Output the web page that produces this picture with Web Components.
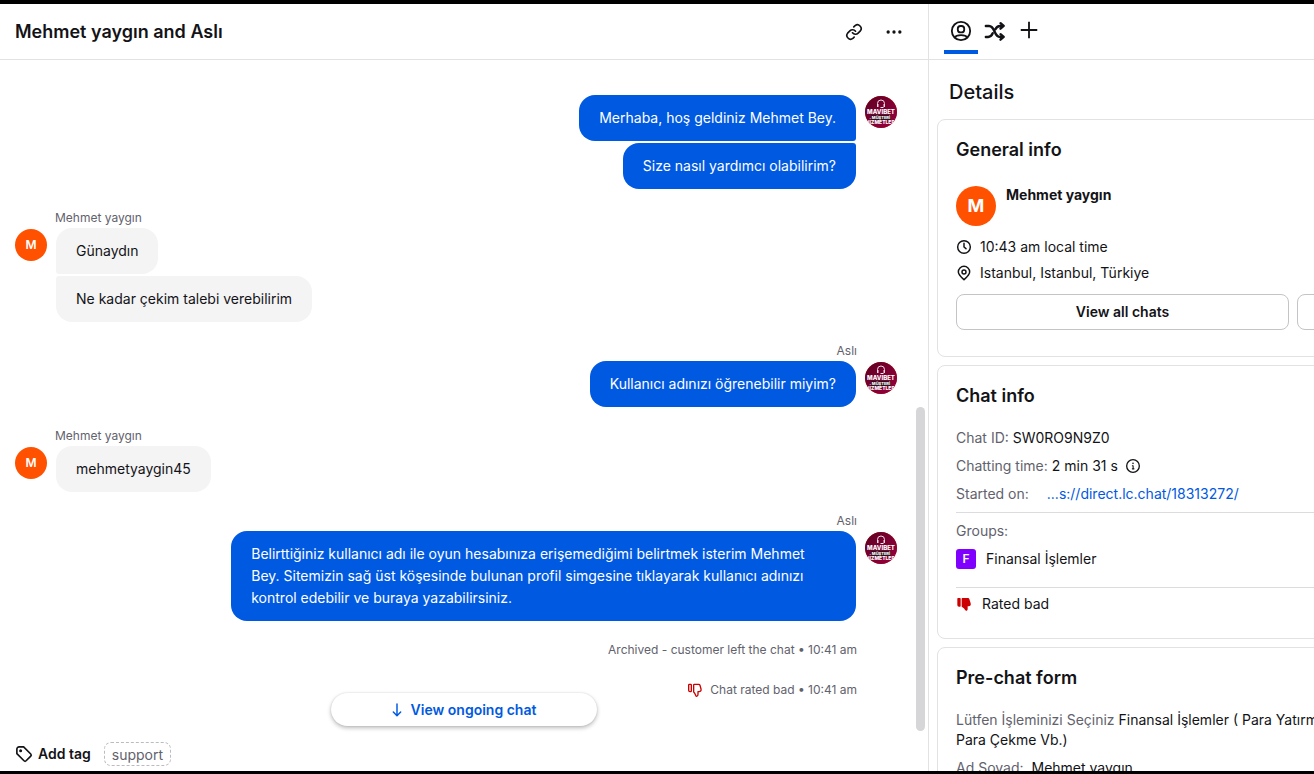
<!DOCTYPE html>
<html lang="tr">
<head>
<meta charset="utf-8">
<title>Mehmet yaygın and Aslı</title>
<style>
  html, body { margin: 0; height: 100%; }
  body {
    --ink: #131317; --muted: #62626d; --line: #e2e2e4; --blue: #0059e1; --orange: #ff5100; --red: #cc0000;
    font: 14px/20px Inter, "Open Sans", sans-serif; color: var(--ink); background: #fff;
  }
</style>
</head>
<body>
<chat-app>
  <chat-thread slot="main" heading="Mehmet yaygın and Aslı">
    <chat-group side="agent">
      <chat-bubble>Merhaba, hoş geldiniz Mehmet Bey.</chat-bubble>
      <chat-bubble>Size nasıl yardımcı olabilirim?</chat-bubble>
    </chat-group>
    <chat-group side="visitor" author="Mehmet yaygın">
      <chat-bubble>Günaydın</chat-bubble>
      <chat-bubble>Ne kadar çekim talebi verebilirim</chat-bubble>
    </chat-group>
    <chat-group side="agent" author="Aslı">
      <chat-bubble>Kullanıcı adınızı öğrenebilir miyim?</chat-bubble>
    </chat-group>
    <chat-group side="visitor" author="Mehmet yaygın">
      <chat-bubble>mehmetyaygin45</chat-bubble>
    </chat-group>
    <chat-group side="agent" author="Aslı">
      <chat-bubble>Belirttiğiniz kullanıcı adı ile oyun hesabınıza erişemediğimi belirtmek isterim Mehmet Bey. Sitemizin sağ üst köşesinde bulunan profil simgesine tıklayarak kullanıcı adınızı kontrol edebilir ve buraya yazabilirsiniz.</chat-bubble>
    </chat-group>
    <chat-event>Archived - customer left the chat • 10:41 am</chat-event>
    <chat-event><ui-icon name="thumb-outline"></ui-icon>Chat rated bad • 10:41 am</chat-event>
  </chat-thread>
  <details-panel slot="side">
    <info-card heading="General info"><general-info></general-info></info-card>
    <info-card heading="Chat info"><chat-info></chat-info></info-card>
    <info-card heading="Pre-chat form"><prechat-form></prechat-form></info-card>
  </details-panel>
</chat-app>

<script>
const define = (name, render) => customElements.define(name, class extends HTMLElement {
  connectedCallback() {
    if (this.shadowRoot) return;
    const t = document.createElement('template');
    t.innerHTML = render(this);
    this.attachShadow({ mode: 'open' }).append(t.content.cloneNode(true));
  }
});

const stroke = (body, w = 2) => `<g fill="none" stroke="currentColor" stroke-width="${w}" stroke-linecap="round" stroke-linejoin="round">${body}</g>`;
const icons = {
  link: [18, stroke('<path d="M10 13a5 5 0 0 0 7.5.5l3-3a5 5 0 0 0-7-7l-1.800 1.700"/><path d="M14 11a5 5 0 0 0-7.500-.5l-3 3a5 5 0 0 0 7 7l1.700-1.700"/>', 2.2)],
  more: [20, '<g fill="currentColor"><circle cx="5" cy="12" r="2"/><circle cx="12" cy="12" r="2"/><circle cx="19" cy="12" r="2"/></g>'],
  person: [22, stroke('<circle cx="12" cy="12" r="10"/><rect x="8.500" y="6.500" width="7" height="7" rx="3"/><path d="M5.500 19c1-2.500 3.600-2.500 6.500-2.500s5.500 0 6.500 2.500"/>')],
  shuffle: [22, stroke('<path d="M2 6.500h3.500C12.500 6.500 10.500 18.500 17.500 18.500H21M2 18.500h2.500c2.600 0 4-1.600 5-4M12.500 10c1-2.200 2.400-3.500 5-3.500H21M18 3.500l3.500 3-3.500 3M18 15.500l3.500 3-3.500 3"/>', 2.6)],
  plus: [22, '<path d="M12 3v18M3 12h18" stroke="currentColor" stroke-width="2" fill="none"/>'],
  clock: [16, stroke('<circle cx="12" cy="12" r="9.500"/><path d="M12 6.500V12l3 2.500"/>', 2.2)],
  pin: [16, stroke('<path d="M12 22C7 17.500 3.500 14.500 3.500 10.500a8.500 8.500 0 0 1 17 0C20.500 14.500 17 17.500 12 22Z"/><circle cx="12" cy="10.500" r="3"/>', 2.2)],
  info: [16, stroke('<circle cx="12" cy="12" r="9.500"/>') + stroke('<path d="M11 11.500h1.200V16M11 16.300h2.500"/>', 1.6) + '<circle cx="12" cy="8" r="1.200" fill="currentColor"/>'],
  tag: [18, stroke('<path d="M2.500 5.500a3 3 0 0 1 3-3h6l9.500 9.500a2 2 0 0 1 0 2.800l-6.200 6.200a2 2 0 0 1-2.800 0L2.500 11.500Z"/>', 2.2) + '<circle cx="7.500" cy="7.500" r="2" fill="currentColor"/>'],
  down: [16, stroke('<path d="M12 3v17M6.500 15l5.500 5.500 5.500-5.500"/>', 2.2)],
  'thumb-outline': [16, stroke('<path d="M3.500 3.500h2q1 0 1 1v9q0 1-1 1h-1q-2 0-2-2v-8q0-1 1-1ZM10 4.500q0-1 1-1h6.500q1.500 0 2 1.500l1.500 5.500c.6 2.500-.5 4-3 4h-1.500V18.500c0 2-.5 3-2 3-1.800 0-1-3-4.500-6.500Z"/>', 2)],
  thumb: [16, '<path fill="currentColor" d="M3 3h3q1 0 1 1v11q0 1-1 1H4.500Q2 16 2 13.500V4q0-1 1-1ZM8.500 4q0-1 1-1H18q1.500 0 2 1.500l2 6.500c.7 2.500-.5 4.500-3 4.500h-1.500V19c0 2-.8 3-2.300 3-2 0-1.200-3-6.200-5.500q-.5-.3-.5-1Z"/>']
};

define('ui-icon', el => {
  const [size, body] = icons[el.getAttribute('name')];
  return `<style>:host{display:inline-flex;flex:none;width:${size}px;height:${size}px} svg{width:100%;height:100%}</style>
    <svg viewBox="0 0 24 24" aria-hidden="true">${body}</svg>`;
});

define('user-avatar', el => {
  const agent = el.getAttribute('kind') === 'agent';
  const large = el.hasAttribute('large');
  return `<style>
    :host { display:flex; flex:none; width:${large ? 40 : 32}px; height:${large ? 40 : 32}px; border-radius:50%; overflow:hidden;
      align-items:center; justify-content:center; background:var(--orange); color:#fff; font-weight:${large ? 700 : 600}; font-size:${large ? 18 : 12}px; }
    svg { width:100%; height:100%; }
    text { font:800 6px Inter, sans-serif; fill:#fff; text-anchor:middle; }
    .badge { font-size:4px; }
    .foot { font-size:5px; }
  </style>` + (agent ? `<svg viewBox="0 0 32 32" role="img" aria-label="Aslı">
      <defs><linearGradient id="g" x1="0" y1="0" x2="1" y2="1"><stop offset="0" stop-color="#5c0022"/><stop offset="1" stop-color="#9c0040"/></linearGradient></defs>
      <rect width="32" height="32" fill="url(#g)"/>
      <path d="M12.500 9V7.500a3.500 3.500 0 0 1 7 0V9" fill="none" stroke="#f3dce4"/>
      <path d="M12 8h1.500v3H12zM18.500 8H20v3h-1.500zM15.500 11h3v1h-3z" fill="#f3dce4"/>
      <text x="16" y="18">MAVİBET</text>
      <rect x="6" y="19" width="20" height="5" rx="1" fill="#29131c"/>
      <text class="badge" x="16" y="23">MÜŞTERİ</text>
      <text class="foot" x="16" y="28">HİZMETLERİ</text>
    </svg>` : 'M');
});

define('chat-app', () => `<style>
    :host { display:grid; grid-template-columns:minmax(0,1fr) 386px; height:100vh; box-sizing:border-box;
      border-top:4px solid #000; border-bottom:3px solid #000; overflow:hidden; }
    ::slotted(*) { min-width:0; min-height:0; }
  </style><slot name="main"></slot><slot name="side"></slot>`);

define('chat-thread', el => `<style>
    :host { display:grid; grid-template-rows:56px minmax(0,1fr) auto; }
    header { display:flex; align-items:center; justify-content:space-between; padding:0 24px 0 15px; border-bottom:1px solid var(--line); }
    h1 { margin:0; font-size:18px; line-height:24px; font-weight:600; }
    button { font:inherit; color:inherit; background:none; border:0; padding:0; display:flex; align-items:center; justify-content:center; cursor:pointer; }
    .tools { display:flex; gap:20px; }
    .tools button { width:20px; height:20px; }
    main { position:relative; min-height:0; }
    .log { display:flex; flex-direction:column; height:100%; box-sizing:border-box; padding:35px 31px 0 15px; overflow:hidden; }
    .thumb { position:absolute; right:3px; bottom:4px; width:9px; height:48%; border-radius:5px; background:#d6d6d8; }
    .ongoing { position:absolute; left:50%; bottom:9px; transform:translateX(-50%); width:266px; height:33px; gap:6px; padding-right:3px;
      border-radius:17px; background:#fff; color:var(--blue); font-weight:600; box-shadow:0 2px 4px rgba(19,19,23,.28), 0 0 2px rgba(19,19,23,.12); }
    footer { display:flex; align-items:center; gap:13px; padding:7px 15px 5px; }
    .add { gap:5px; font-weight:600; }
    .tag { box-sizing:border-box; height:24px; padding:0 7px; line-height:24px; border:1px dashed #bbbbc1; border-radius:7px; color:var(--muted); }
  </style>
  <header><h1>${el.getAttribute('heading')}</h1>
    <div class="tools"><button aria-label="Copy link"><ui-icon name="link"></ui-icon></button><button aria-label="More"><ui-icon name="more"></ui-icon></button></div>
  </header>
  <main><div class="log"><slot></slot></div><div class="thumb"></div>
    <button class="ongoing"><ui-icon name="down"></ui-icon>View ongoing chat</button></main>
  <footer><button class="add"><ui-icon name="tag"></ui-icon>Add tag</button><span class="tag">support</span></footer>`);

define('chat-group', el => {
  const author = el.getAttribute('author');
  const agent = el.getAttribute('side') === 'agent';
  return `<style>
    :host { display:flex; flex:none; gap:8px; margin-bottom:19px; flex-direction:${agent ? 'row-reverse' : 'row'}; padding-${agent ? 'left' : 'right'}:41px;
      --bubble-bg:${agent ? 'var(--blue)' : '#f4f4f5'}; --bubble-ink:${agent ? '#fff' : 'var(--ink)'}; }
    .body { display:flex; flex:1; min-width:0; flex-direction:column; align-items:${agent ? 'flex-end' : 'flex-start'}; }
    .name { height:20px; font-size:12px; color:var(--muted); }
    user-avatar { margin-top:${author ? 21 : 1}px; }
    ::slotted(*) { max-width:78%; margin-${agent ? 'right' : 'left'}:1px; }
    ::slotted(:not(:last-child)) { margin-bottom:2px; border-bottom-${agent ? 'right' : 'left'}-radius:3px !important; }
    ::slotted(:not(:first-child)) { border-top-${agent ? 'right' : 'left'}-radius:3px !important; }
  </style><user-avatar kind="${agent ? 'agent' : 'visitor'}"></user-avatar>
  <div class="body">${author ? `<div class="name">${author}</div>` : ''}<slot></slot></div>`;
});

define('chat-bubble', () => `<style>
    :host { display:block; box-sizing:border-box; padding:12px 20px; border-radius:16px; line-height:22px; background:var(--bubble-bg); color:var(--bubble-ink); }
  </style><slot></slot>`);

define('chat-event', () => `<style>
    :host { display:flex; flex:none; justify-content:flex-end; align-items:center; gap:7px; padding-right:40px; margin-bottom:20px; font-size:12px; color:var(--muted); }
    ::slotted(ui-icon) { color:var(--red); }
  </style><slot></slot>`);

define('details-panel', () => `<style>
    :host { display:grid; grid-template-rows:56px minmax(0,1fr); border-left:1px solid var(--line); overflow:hidden; }
    nav { display:flex; padding-left:15px; border-bottom:1px solid var(--line); }
    button { box-sizing:border-box; width:34px; height:50px; padding:8px 0 0; border:0; border-bottom:4px solid transparent; background:none; color:inherit; display:flex; align-items:center; justify-content:center; }
    button[aria-current] { border-color:var(--blue); }
    button:last-child { padding-top:5px; }
    .scroll { overflow:hidden; }
    .content { width:415px; padding:0 8px; }
    h2 { margin:0; padding:20px 12px 15px; font-size:20px; line-height:24px; font-weight:500; }
  </style>
  <nav><button aria-label="Details" aria-current="true"><ui-icon name="person"></ui-icon></button><button aria-label="Transfers"><ui-icon name="shuffle"></ui-icon></button><button aria-label="Add"><ui-icon name="plus"></ui-icon></button></nav>
  <div class="scroll"><div class="content"><h2>Details</h2><slot></slot></div></div>`);

define('info-card', el => `<style>
    :host { display:block; margin-bottom:8px; padding:18px 18px 24px; border:1px solid var(--line); border-radius:8px; }
    h3 { margin:0 0 20px; font-size:18px; line-height:24px; font-weight:600; }
  </style><h3>${el.getAttribute('heading')}</h3><slot></slot>`);

define('general-info', () => `<style>
    :host { display:block; padding:4px 0 2px; }
    .who { display:flex; gap:10px; font-weight:700; line-height:18px; margin-bottom:11px; }
    .row { display:flex; align-items:center; gap:8px; margin-bottom:6px; }
    .actions { display:flex; gap:8px; margin-top:11px; }
    button { height:36px; padding:0; font:inherit; font-weight:600; color:inherit; background:#fff; border:1px solid #c4c4c8; border-radius:8px; }
    .all { flex:1; } .menu { width:36px; }
  </style>
  <div class="who"><user-avatar large></user-avatar><span>Mehmet yaygın</span></div>
  <div class="row"><ui-icon name="clock"></ui-icon>10:43 am local time</div>
  <div class="row"><ui-icon name="pin"></ui-icon>Istanbul, Istanbul, Türkiye</div>
  <div class="actions"><button class="all">View all chats</button><button class="menu" aria-label="More actions"></button></div>`);

define('chat-info', () => `<style>
    :host { display:flex; flex-direction:column; gap:8px; }
    .label { color:var(--muted); }
    .row { display:flex; align-items:center; }
    .time { gap:4px; } .time ui-icon { margin-left:3px; }
    .start { gap:18px; }
    a { color:var(--blue); text-decoration:none; }
    hr { width:100%; margin:0; border:0; border-top:1px solid #dcdce0; }
    .group { gap:10px; margin-bottom:10px; }
    .badge { width:20px; height:20px; border-radius:3px; background:#8000ff; color:#fff; font-size:12px; font-weight:600; text-align:center; }
    .rated { gap:10px; padding-top:6px; border-top:1px solid #dcdce0; } .rated ui-icon { color:var(--red); }
  </style>
  <div><span class="label">Chat ID:</span> SW0RO9N9Z0</div>
  <div class="row time"><span class="label">Chatting time:</span><span>2 min 31 s</span> <ui-icon name="info"></ui-icon></div>
  <div class="row start"><span class="label">Started on:</span><a href="#chat">...s://direct.lc.chat/18313272/</a></div>
  <hr><div class="label">Groups:</div>
  <div class="row group"><span class="badge">F</span>Finansal İşlemler</div>
  <div class="row rated"><ui-icon name="thumb"></ui-icon>Rated bad</div>`);

define('prechat-form', () => `<style>
    :host { display:block; } p { margin:0 0 8px; } span { color:var(--muted); } b { font-weight:400; margin-left:4px; }
  </style>
  <p><span>Lütfen İşleminizi Seçiniz</span> Finansal İşlemler ( Para Yatırma, Para Çekme Vb.)</p>
  <p><span>Ad Soyad:</span> <b>Mehmet yaygın</b></p>`);
</script>
</body>
</html>
